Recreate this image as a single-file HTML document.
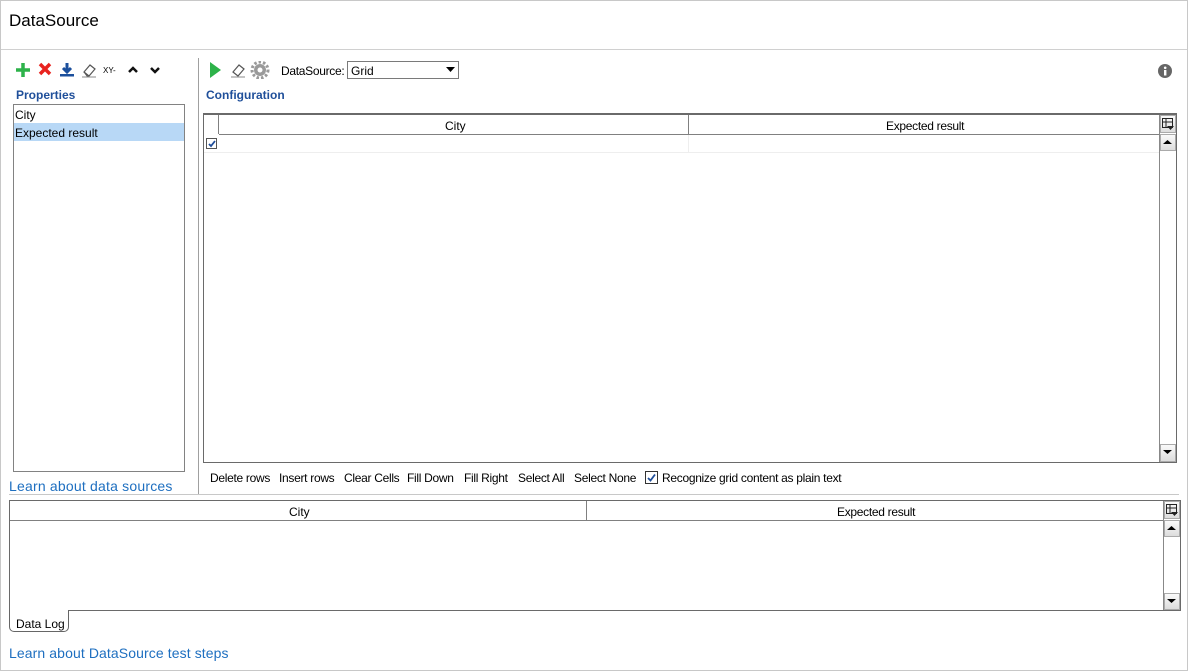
<!DOCTYPE html>
<html><head><style>
*{margin:0;padding:0;box-sizing:border-box}
body{width:1188px;height:671px;position:relative;background:#fff;font-family:"Liberation Sans",Arial,sans-serif;font-size:12px;color:#000;overflow:hidden}
.a{position:absolute;white-space:nowrap}
.lnk{color:#1e6fc0;font-size:14px}
.hd{color:#1f4f9a;font-weight:bold;font-size:12px}
.sb{background:linear-gradient(#fafafa,#dcdcdc);border:1px solid #aaa}
.t{letter-spacing:-0.3px}
</style></head><body>
<div class="a" style="left:0;top:0;width:1188px;height:671px;border:1px solid #c8c8c8"></div>
<div class="a" style="left:9px;top:11px;font-size:17px">DataSource</div>
<div class="a" style="left:1px;top:49px;width:1186px;height:1px;background:#d0d0d0"></div>

<svg class="a" style="left:14px;top:61px" width="150" height="18">
<path d="M9 2v14M2 9h14" stroke="#2db24a" stroke-width="3.5"/>
<path d="M26 3l10 10M36 3l-10 10" stroke="#e8231f" stroke-width="3.5"/>
<path d="M53 2v8M49 7l4 4 4-4" stroke="#1b4f9c" stroke-width="3" fill="none"/><rect x="46" y="13" width="14" height="2.5" fill="#1b4f9c"/>
<path d="M70 11l6-7 5 4-6 7z" fill="#fff" stroke="#555" stroke-width="1.2"/><path d="M70 11l3 4h2" stroke="#555" fill="none"/><path d="M68 16h14" stroke="#888"/>
<text x="89" y="12" font-size="8" font-family="Liberation Sans">XY-</text>
<path d="M115 11l4-4 4 4" stroke="#111" stroke-width="2.5" fill="none"/>
<path d="M137 7l4 4 4-4" stroke="#111" stroke-width="2.5" fill="none"/>
</svg>
<div class="a hd" style="left:16px;top:88px">Properties</div>
<div class="a" style="left:13px;top:104px;width:172px;height:368px;border:1px solid #828282"></div>
<div class="a" style="left:15px;top:108px">City</div>
<div class="a" style="left:14px;top:123px;width:170px;height:18px;background:#b8d8f6"></div>
<div class="a" style="left:15px;top:126px">Expected result</div>
<div class="a lnk" style="left:9px;top:478px;letter-spacing:0.2px">Learn about data sources</div>

<div class="a" style="left:198px;top:58px;width:1px;height:437px;background:#a0a0a0"></div>

<svg class="a" style="left:207px;top:61px" width="64" height="18">
<path d="M3 1l11 8-11 8z" fill="#2db24a"/>
<path d="M26 11l6-7 5 4-6 7z" fill="#fff" stroke="#555" stroke-width="1.2"/><path d="M24 16h14" stroke="#888"/>
<circle cx="53" cy="9" r="6" fill="#9a9a9a"/><circle cx="53" cy="9" r="8" fill="none" stroke="#9a9a9a" stroke-width="3" stroke-dasharray="2.5 2"/><circle cx="53" cy="9" r="2.5" fill="#fff"/>
</svg>
<div class="a t" style="left:281px;top:64px">DataSource:</div>
<div class="a" style="left:347px;top:61px;width:112px;height:18px;border:1px solid #7a7a7a;padding:2px 3px">Grid</div>
<svg class="a" style="left:446px;top:67px" width="9" height="6"><path d="M0 0h9l-4.5 5z" fill="#000"/></svg>
<svg class="a" style="left:1158px;top:64px" width="14" height="14"><circle cx="7" cy="7" r="7" fill="#666"/><rect x="6" y="6" width="2.4" height="5.5" fill="#fff"/><circle cx="7.2" cy="3.8" r="1.3" fill="#fff"/></svg>
<div class="a hd" style="left:206px;top:88px">Configuration</div>

<div class="a" style="left:203px;top:113px;width:974px;height:350px;border:1px solid #6a6a6a;border-top-width:2px"></div>
<div class="a" style="left:218px;top:115px;width:1px;height:19px;background:#808080"></div>
<div class="a" style="left:219px;top:134px;width:940px;height:1px;background:#808080"></div>
<div class="a" style="left:688px;top:115px;width:1px;height:19px;background:#808080"></div>
<div class="a" style="left:445px;top:119px">City</div>
<div class="a t" style="left:886px;top:119px">Expected result</div>
<div class="a" style="left:204px;top:152px;width:955px;height:1px;background:#eee"></div>
<div class="a" style="left:688px;top:135px;width:1px;height:17px;background:#eee"></div>
<div class="a" style="left:206px;top:138px;width:11px;height:11px;border:1px solid #555;background:#fff"></div>
<svg class="a" style="left:207px;top:139px" width="10" height="10"><path d="M2 5l2 2 4-5" stroke="#1e4d9a" stroke-width="1.8" fill="none"/></svg>
<div class="a" style="left:1159px;top:115px;width:1px;height:347px;background:#888"></div>
<div class="a sb" style="left:1160px;top:115px;width:16px;height:18px"></div>
<svg class="a" style="left:1161px;top:117px" width="14" height="14"><rect x="1.5" y="1.5" width="10" height="9" fill="none" stroke="#222"/><path d="M1.5 5h10M5 1.5v9" stroke="#222"/><path d="M6 9h7l-3.5 4z" fill="#222"/></svg>
<div class="a sb" style="left:1160px;top:134px;width:16px;height:17px"></div>
<svg class="a" style="left:1163px;top:139px" width="10" height="6"><path d="M0 5h9l-4.5-4z" fill="#000"/></svg>
<div class="a sb" style="left:1160px;top:444px;width:16px;height:18px"></div>
<svg class="a" style="left:1163px;top:450px" width="10" height="6"><path d="M0 0h9l-4.5 4z" fill="#000"/></svg>

<div class="a t" style="left:210px;top:471px">Delete rows</div>
<div class="a t" style="left:279px;top:471px">Insert rows</div>
<div class="a t" style="left:344px;top:471px">Clear Cells</div>
<div class="a t" style="left:407px;top:471px">Fill Down</div>
<div class="a t" style="left:464px;top:471px">Fill Right</div>
<div class="a t" style="left:518px;top:471px">Select All</div>
<div class="a t" style="left:574px;top:471px">Select None</div>
<div class="a" style="left:645px;top:471px;width:13px;height:13px;border:1px solid #333"></div>
<svg class="a" style="left:646px;top:472px" width="11" height="11"><path d="M2 6l2.5 2.5 4.5-6" stroke="#1e4d9a" stroke-width="1.8" fill="none"/></svg>
<div class="a t" style="left:662px;top:471px">Recognize grid content as plain text</div>

<div class="a" style="left:9px;top:494px;width:1170px;height:1px;background:#c8c8c8"></div>

<div class="a" style="left:9px;top:500px;width:1172px;height:111px;border:1px solid #6a6a6a"></div>
<div class="a" style="left:10px;top:520px;width:1153px;height:1px;background:#808080"></div>
<div class="a" style="left:586px;top:501px;width:1px;height:19px;background:#808080"></div>
<div class="a" style="left:289px;top:505px">City</div>
<div class="a t" style="left:837px;top:505px">Expected result</div>
<div class="a" style="left:1163px;top:501px;width:1px;height:109px;background:#888"></div>
<div class="a sb" style="left:1164px;top:501px;width:16px;height:18px"></div>
<svg class="a" style="left:1165px;top:503px" width="14" height="14"><rect x="1.5" y="1.5" width="10" height="9" fill="none" stroke="#222"/><path d="M1.5 5h10M5 1.5v9" stroke="#222"/><path d="M6 9h7l-3.5 4z" fill="#222"/></svg>
<div class="a sb" style="left:1164px;top:520px;width:16px;height:17px"></div>
<svg class="a" style="left:1167px;top:525px" width="10" height="6"><path d="M0 5h9l-4.5-4z" fill="#000"/></svg>
<div class="a sb" style="left:1164px;top:593px;width:16px;height:17px"></div>
<svg class="a" style="left:1167px;top:599px" width="10" height="6"><path d="M0 0h9l-4.5 4z" fill="#000"/></svg>

<div class="a" style="left:9px;top:610px;width:60px;height:22px;border:1px solid #666;border-top:none;border-radius:0 0 5px 5px;background:#fff"></div>
<div class="a" style="left:16px;top:617px">Data Log</div>
<div class="a lnk" style="left:9px;top:645px;letter-spacing:0.1px">Learn about DataSource test steps</div>
</body></html>
